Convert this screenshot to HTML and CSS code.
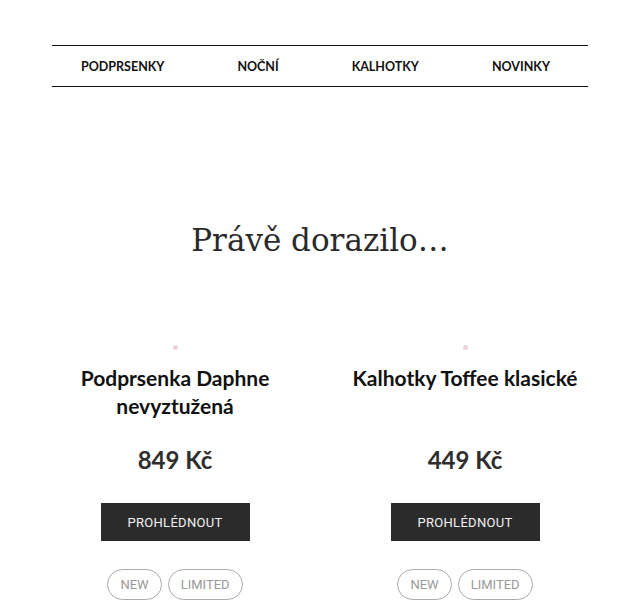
FILE: index.html
```html
<!DOCTYPE html>
<html lang="cs">
<head>
<meta charset="utf-8">
<title>Právě dorazilo</title>
<link rel="stylesheet" href="styles.css">
</head>
<body>
<div class="page">
  <nav class="nav">
    <a class="nav-item" href="#">PODPRSENKY</a>
    <a class="nav-item" href="#">NOČNÍ</a>
    <a class="nav-item" href="#">KALHOTKY</a>
    <a class="nav-item" href="#">NOVINKY</a>
  </nav>
  <h1 class="heading">Právě dorazilo…</h1>
  <div class="products">
    <div class="product">
      <span class="thumb"></span>
      <h2 class="title">Podprsenka Daphne nevyztužená</h2>
      <div class="price">849 Kč</div>
      <a class="btn" href="#">PROHLÉDNOUT</a>
      <div class="tags"><span class="tag">NEW</span><span class="tag">LIMITED</span></div>
    </div>
    <div class="product">
      <span class="thumb"></span>
      <h2 class="title">Kalhotky Toffee klasické</h2>
      <div class="price">449 Kč</div>
      <a class="btn" href="#">PROHLÉDNOUT</a>
      <div class="tags"><span class="tag">NEW</span><span class="tag">LIMITED</span></div>
    </div>
  </div>
</div>
</body>
</html>
```
FILE: styles.css
```css
html, body { margin: 0; padding: 0; background: #fff; }
body { font-family: "Lato", "Open Sans", sans-serif; color: #111; }
.page { width: 536px; margin: 0 auto; padding-top: 45px; }
.nav {
  display: flex; justify-content: space-between; align-items: center;
  height: 40px; border-top: 1px solid #111; border-bottom: 1px solid #111;
  padding: 0 38px 0 29px;
}
.nav-item { font-size: 12.5px; font-weight: 700; color: #111; text-decoration: none; }
.heading {
  margin: 128px 0 0; text-align: center; font-family: "DejaVu Serif", "Liberation Serif", serif;
  font-weight: 400; font-size: 31px; line-height: 50px; color: #2a2a2a;
}
.products { display: grid; grid-template-columns: 246px 246px; column-gap: 44px; margin-top: 80px; }
.product { display: flex; flex-direction: column; align-items: center; text-align: center; }
.thumb { width: 5px; height: 5px; border-radius: 50%; background: #ecd3da; }
.title {
  margin: 14px 0 0; height: 58px; font-size: 21px; line-height: 28px; font-weight: 700; color: #111;
}
.price { margin-top: 23px; font-size: 24px; font-weight: 700; color: #2e2e2e; line-height: 30px; }
.btn {
  margin-top: 28px; width: 149px; height: 38px; display: flex; align-items: center; justify-content: center;
  background: #2b2b2b; color: #f2f2f2; font-family: "Roboto", sans-serif; font-size: 13px; text-decoration: none;
  letter-spacing: 0.3px;
}
.tags { display: flex; gap: 6px; margin-top: 28px; }
.tag {
  border: 1px solid #aaa; border-radius: 16px; height: 29px; padding: 0 12px; display: flex; align-items: center;
  font-family: "Roboto", sans-serif; font-size: 13px; color: #999;
}
```
